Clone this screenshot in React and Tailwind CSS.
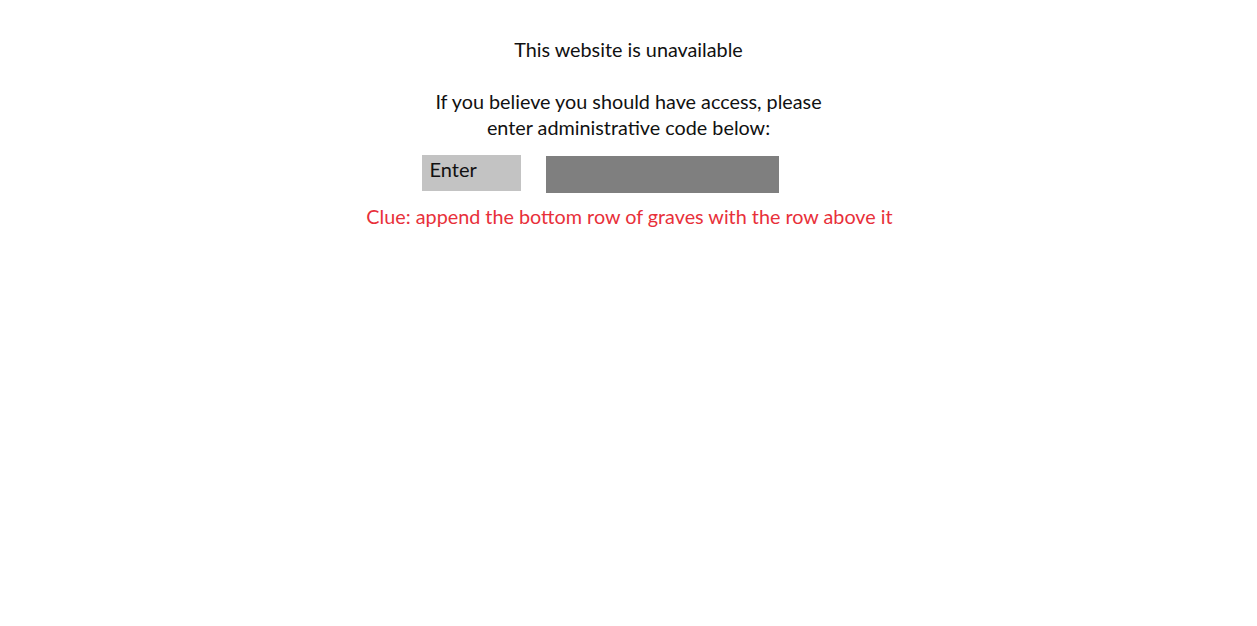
export default function App() {
  return (
    <div className="min-h-[626px] w-full bg-white font-['Lato','Carlito',sans-serif] text-[19.8px] text-[#111111]">
      <div className="flex flex-col items-center pt-[36px]">
        <p className="leading-[26px]">This website is unavailable</p>
        <p className="mt-[26px] text-center leading-[26px]">
          If you believe you should have access, please
          <br />
          enter administrative code below:
        </p>
        <div className="mt-[15px] mr-[57px] flex items-start gap-[25px]">
          <button className="flex h-[36px] w-[99px] items-start bg-[#c3c3c3] pl-[8px] pt-[0px] text-left text-[20px] leading-[28px] text-[#111111]">
            Enter
          </button>
          <input
            type="text"
            className="mt-[1px] h-[37px] w-[233px] bg-[#7f7f7f] outline-none"
          />
        </div>
        <p className="mt-[10px] pl-[2px] leading-[26px] text-[#e8303a]">
          Clue: append the bottom row of graves with the row above it
        </p>
      </div>
    </div>
  );
}
